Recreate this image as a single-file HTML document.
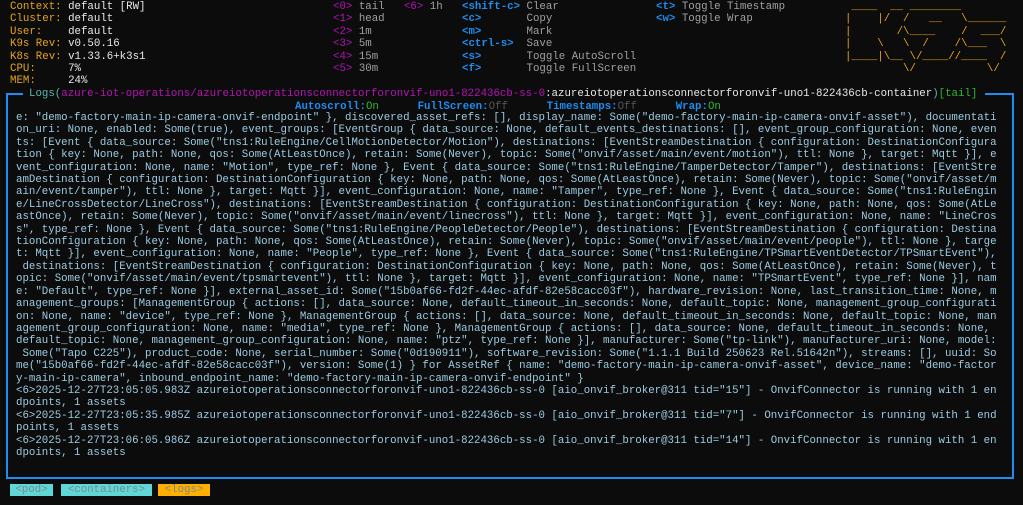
<!DOCTYPE html>
<html><head><meta charset="utf-8"><style>
html,body{margin:0;padding:0;background:#0c0c0c;width:1023px;height:505px;overflow:hidden}
body{position:relative;font-family:"Liberation Mono",monospace;font-size:10.75px;line-height:12.4px}
.a{position:absolute;white-space:pre}
.o{color:#e6a31e}.w{color:#e8e8e8}.m{color:#b414b4}.g{color:#a0a0a0}.b{color:#1e8cf0;font-weight:bold}
.c{color:#5fb4b4}.gr{color:#2fb82f}.dg{color:#555}
.log{color:#9ccbe2}
.bl{position:absolute;background:#1e8cf0}
.cr{position:absolute;top:484px;height:12px;line-height:12px;color:#7a8a8a;font-size:10.7px;text-align:center}
</style></head><body>
<div class="a" style="left:10px;top:1px"><span class="o">Context: </span><span class="w">default [RW]</span>
<span class="o">Cluster: </span><span class="w">default</span>
<span class="o">User:    </span><span class="w">default</span>
<span class="o">K9s Rev: </span><span class="w">v0.50.16</span>
<span class="o">K8s Rev: </span><span class="w">v1.33.6+k3s1</span>
<span class="o">CPU:     </span><span class="w">7%</span>
<span class="o">MEM:     </span><span class="w">24%</span></div>
<div class="a" style="left:333px;top:1px"><span class="m">&lt;0&gt;</span> <span class="g">tail</span>   <span class="m">&lt;6&gt;</span> <span class="g">1h</span>
<span class="m">&lt;1&gt;</span> <span class="g">head</span>
<span class="m">&lt;2&gt;</span> <span class="g">1m</span>
<span class="m">&lt;3&gt;</span> <span class="g">5m</span>
<span class="m">&lt;4&gt;</span> <span class="g">15m</span>
<span class="m">&lt;5&gt;</span> <span class="g">30m</span></div>
<div class="a" style="left:462px;top:1px"><span class="b">&lt;shift-c&gt;</span> <span class="g">Clear</span>
<span class="b">&lt;c&gt;</span>       <span class="g">Copy</span>
<span class="b">&lt;m&gt;</span>       <span class="g">Mark</span>
<span class="b">&lt;ctrl-s&gt;</span>  <span class="g">Save</span>
<span class="b">&lt;s&gt;</span>       <span class="g">Toggle AutoScroll</span>
<span class="b">&lt;f&gt;</span>       <span class="g">Toggle FullScreen</span></div>
<div class="a" style="left:656px;top:1px"><span class="b">&lt;t&gt;</span> <span class="g">Toggle Timestamp</span>
<span class="b">&lt;w&gt;</span> <span class="g">Toggle Wrap</span></div>
<div class="a o" style="left:845px;top:1px"> ____  __ ________
|    |/  /   __   \______
|       /\____    /  ___/
|    \   \  /    /\___  \
|____|\__ \/____//____  /
         \/           \/</div>
<div class="bl" style="left:6px;top:93px;width:17px;height:2px"></div>
<div class="bl" style="left:985px;top:93px;width:29px;height:2px"></div>
<div class="bl" style="left:6px;top:93px;width:2px;height:386px"></div>
<div class="bl" style="left:1012px;top:93px;width:2px;height:386px"></div>
<div class="bl" style="left:6px;top:477px;width:1008px;height:2px"></div>
<div class="a" style="left:29px;top:88px"><span class="c">Logs(</span><span class="m">azure-iot-operations/azureiotoperationsconnectorforonvif-uno1-822436cb-ss-0</span><span class="w">:azureiotoperationsconnectorforonvif-uno1-822436cb-container</span><span class="c">)</span><span class="gr">[tail]</span></div>
<div class="a" style="left:295px;top:100.5px"><span class="b">Autoscroll:</span><span class="gr">On</span>      <span class="b">FullScreen:</span><span class="dg">Off</span>      <span class="b">Timestamps:</span><span class="dg">Off</span>      <span class="b">Wrap:</span><span class="gr">On</span></div>
<div class="a log" style="left:16px;top:112px">e: "demo-factory-main-ip-camera-onvif-endpoint" }, discovered_asset_refs: [], display_name: Some("demo-factory-main-ip-camera-onvif-asset"), documentati
on_uri: None, enabled: Some(true), event_groups: [EventGroup { data_source: None, default_events_destinations: [], event_group_configuration: None, even
ts: [Event { data_source: Some("tns1:RuleEngine/CellMotionDetector/Motion"), destinations: [EventStreamDestination { configuration: DestinationConfigura
tion { key: None, path: None, qos: Some(AtLeastOnce), retain: Some(Never), topic: Some("onvif/asset/main/event/motion"), ttl: None }, target: Mqtt }], e
vent_configuration: None, name: "Motion", type_ref: None }, Event { data_source: Some("tns1:RuleEngine/TamperDetector/Tamper"), destinations: [EventStre
amDestination { configuration: DestinationConfiguration { key: None, path: None, qos: Some(AtLeastOnce), retain: Some(Never), topic: Some("onvif/asset/m
ain/event/tamper"), ttl: None }, target: Mqtt }], event_configuration: None, name: "Tamper", type_ref: None }, Event { data_source: Some("tns1:RuleEngin
e/LineCrossDetector/LineCross"), destinations: [EventStreamDestination { configuration: DestinationConfiguration { key: None, path: None, qos: Some(AtLe
astOnce), retain: Some(Never), topic: Some("onvif/asset/main/event/linecross"), ttl: None }, target: Mqtt }], event_configuration: None, name: "LineCros
s", type_ref: None }, Event { data_source: Some("tns1:RuleEngine/PeopleDetector/People"), destinations: [EventStreamDestination { configuration: Destina
tionConfiguration { key: None, path: None, qos: Some(AtLeastOnce), retain: Some(Never), topic: Some("onvif/asset/main/event/people"), ttl: None }, targe
t: Mqtt }], event_configuration: None, name: "People", type_ref: None }, Event { data_source: Some("tns1:RuleEngine/TPSmartEventDetector/TPSmartEvent"),
 destinations: [EventStreamDestination { configuration: DestinationConfiguration { key: None, path: None, qos: Some(AtLeastOnce), retain: Some(Never), t
opic: Some("onvif/asset/main/event/tpsmartevent"), ttl: None }, target: Mqtt }], event_configuration: None, name: "TPSmartEvent", type_ref: None }], nam
e: "Default", type_ref: None }], external_asset_id: Some("15b0af66-fd2f-44ec-afdf-82e58cacc03f"), hardware_revision: None, last_transition_time: None, m
anagement_groups: [ManagementGroup { actions: [], data_source: None, default_timeout_in_seconds: None, default_topic: None, management_group_configurati
on: None, name: "device", type_ref: None }, ManagementGroup { actions: [], data_source: None, default_timeout_in_seconds: None, default_topic: None, man
agement_group_configuration: None, name: "media", type_ref: None }, ManagementGroup { actions: [], data_source: None, default_timeout_in_seconds: None,
default_topic: None, management_group_configuration: None, name: "ptz", type_ref: None }], manufacturer: Some("tp-link"), manufacturer_uri: None, model:
 Some("Tapo C225"), product_code: None, serial_number: Some("0d190911"), software_revision: Some("1.1.1 Build 250623 Rel.51642n"), streams: [], uuid: So
me("15b0af66-fd2f-44ec-afdf-82e58cacc03f"), version: Some(1) } for AssetRef { name: "demo-factory-main-ip-camera-onvif-asset", device_name: "demo-factor
y-main-ip-camera", inbound_endpoint_name: "demo-factory-main-ip-camera-onvif-endpoint" }
&lt;6&gt;2025-12-27T23:05:05.983Z azureiotoperationsconnectorforonvif-uno1-822436cb-ss-0 [aio_onvif_broker@311 tid="15"] - OnvifConnector is running with 1 en
dpoints, 1 assets
&lt;6&gt;2025-12-27T23:05:35.985Z azureiotoperationsconnectorforonvif-uno1-822436cb-ss-0 [aio_onvif_broker@311 tid="7"] - OnvifConnector is running with 1 end
points, 1 assets
&lt;6&gt;2025-12-27T23:06:05.986Z azureiotoperationsconnectorforonvif-uno1-822436cb-ss-0 [aio_onvif_broker@311 tid="14"] - OnvifConnector is running with 1 en
dpoints, 1 assets</div>
<div class="cr" style="left:10px;width:43px;background:#5fd7d7">&lt;pod&gt;</div>
<div class="cr" style="left:61px;width:91px;background:#5fd7d7">&lt;containers&gt;</div>
<div class="cr" style="left:158px;width:52px;background:#ffaf00">&lt;logs&gt;</div>
</body></html>
